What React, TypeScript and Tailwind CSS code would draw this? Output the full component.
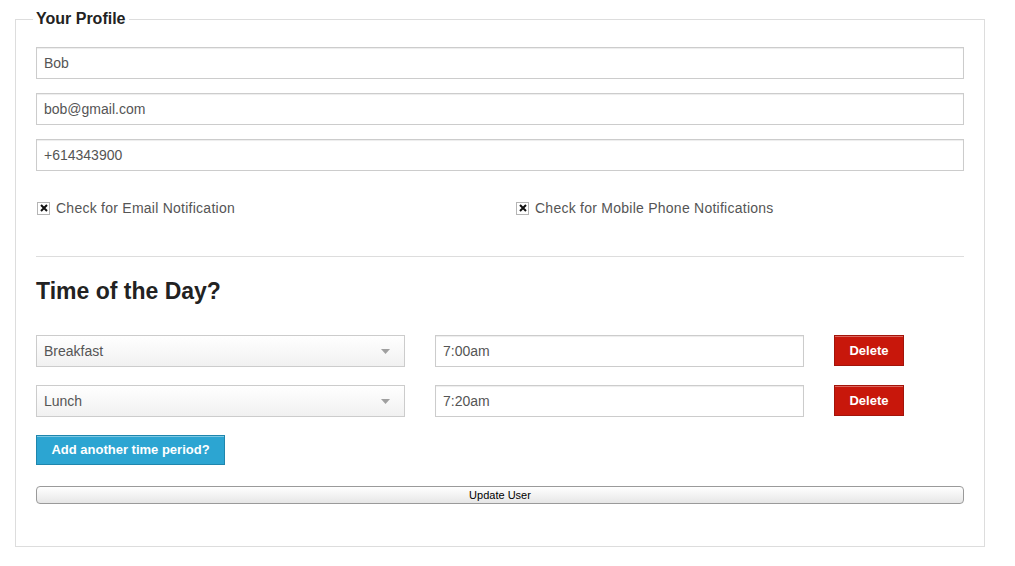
const font = { fontFamily: '"Liberation Sans", Arial, sans-serif' };

function TextField({ value, w }: { value: string; w: string }) {
  return (
    <input
      readOnly
      value={value}
      className={`${w} h-[32px] border border-[#cccccc] bg-white px-[7px] text-[14px] text-[#555555] shadow-[inset_0_1px_1px_rgba(0,0,0,0.075)] outline-none`}
    />
  );
}

function Check({ label }: { label: string }) {
  return (
    <label className="flex h-[20px] items-center text-[14px] tracking-[0.25px] text-[#555555]">
      <span className="ml-[1px] flex h-[13px] w-[13px] items-center justify-center border border-[#b5b5b5] bg-white">
        <svg width="8" height="8" viewBox="0 0 8 8">
          <path d="M1 1L7 7M7 1L1 7" stroke="#111" strokeWidth="2" />
        </svg>
      </span>
      <span className="ml-[6px]">{label}</span>
    </label>
  );
}

function SelectBox({ value }: { value: string }) {
  return (
    <div className="flex h-[32px] w-[369px] items-center justify-between border border-[#cccccc] bg-gradient-to-b from-white to-[#f1f1f1] pl-[7px] pr-[14px] text-[14px] text-[#555555]">
      <span>{value}</span>
      <svg width="9" height="5" viewBox="0 0 9 5">
        <path d="M0 0H9L4.5 5Z" fill="#a0a0a0" />
      </svg>
    </div>
  );
}

function TimeRow({ meal, time }: { meal: string; time: string }) {
  return (
    <div className="flex items-start">
      <SelectBox value={meal} />
      <div className="ml-[30px]">
        <TextField value={time} w="w-[369px]" />
      </div>
      <button className="ml-[30px] h-[31px] w-[70px] border border-[#a3140a] bg-[#c8170b] text-[13px] font-bold text-white shadow-[inset_0_1px_0_rgba(255,255,255,0.35)]">
        Delete
      </button>
    </div>
  );
}

export default function App() {
  return (
    <div className="min-h-[566px] bg-white pl-[15px] pt-[9px]" style={font}>
      <fieldset className="w-[970px] border border-[#dddddd] px-[20px] pb-[42px]">
        <legend className="-ml-[3px] px-[3px] text-[16px] font-bold leading-[20px] text-[#222222]">
          Your Profile
        </legend>

        <div className="mt-[18px] flex flex-col gap-[14px]">
          <TextField value="Bob" w="w-[928px]" />
          <TextField value="bob@gmail.com" w="w-[928px]" />
          <TextField value="+614343900" w="w-[928px]" />
        </div>

        <div className="mt-[27px] flex">
          <div className="w-[479px]">
            <Check label="Check for Email Notification" />
          </div>
          <Check label="Check for Mobile Phone Notifications" />
        </div>

        <hr className="mt-[38px] w-[928px] border-t border-[#dddddd]" />

        <h2 className="mt-[20px] text-[23px] font-bold leading-[28px] text-[#222222]">
          Time of the Day?
        </h2>

        <div className="mt-[30px] flex flex-col gap-[18px]">
          <TimeRow meal="Breakfast" time="7:00am" />
          <TimeRow meal="Lunch" time="7:20am" />
        </div>

        <button className="mt-[18px] h-[30px] w-[189px] border border-[#1f86ad] bg-[#2ca5d2] text-[13px] font-bold text-white shadow-[inset_0_1px_0_rgba(255,255,255,0.4)]">
          Add another time period?
        </button>

        <button className="mt-[21px] block h-[18px] w-[928px] rounded-[4px] border border-[#9a9a9a] bg-gradient-to-b from-white via-[#f3f3f3] to-[#e6e6e6] text-[11px] leading-[16px] text-black">
          Update User
        </button>
      </fieldset>
    </div>
  );
}
